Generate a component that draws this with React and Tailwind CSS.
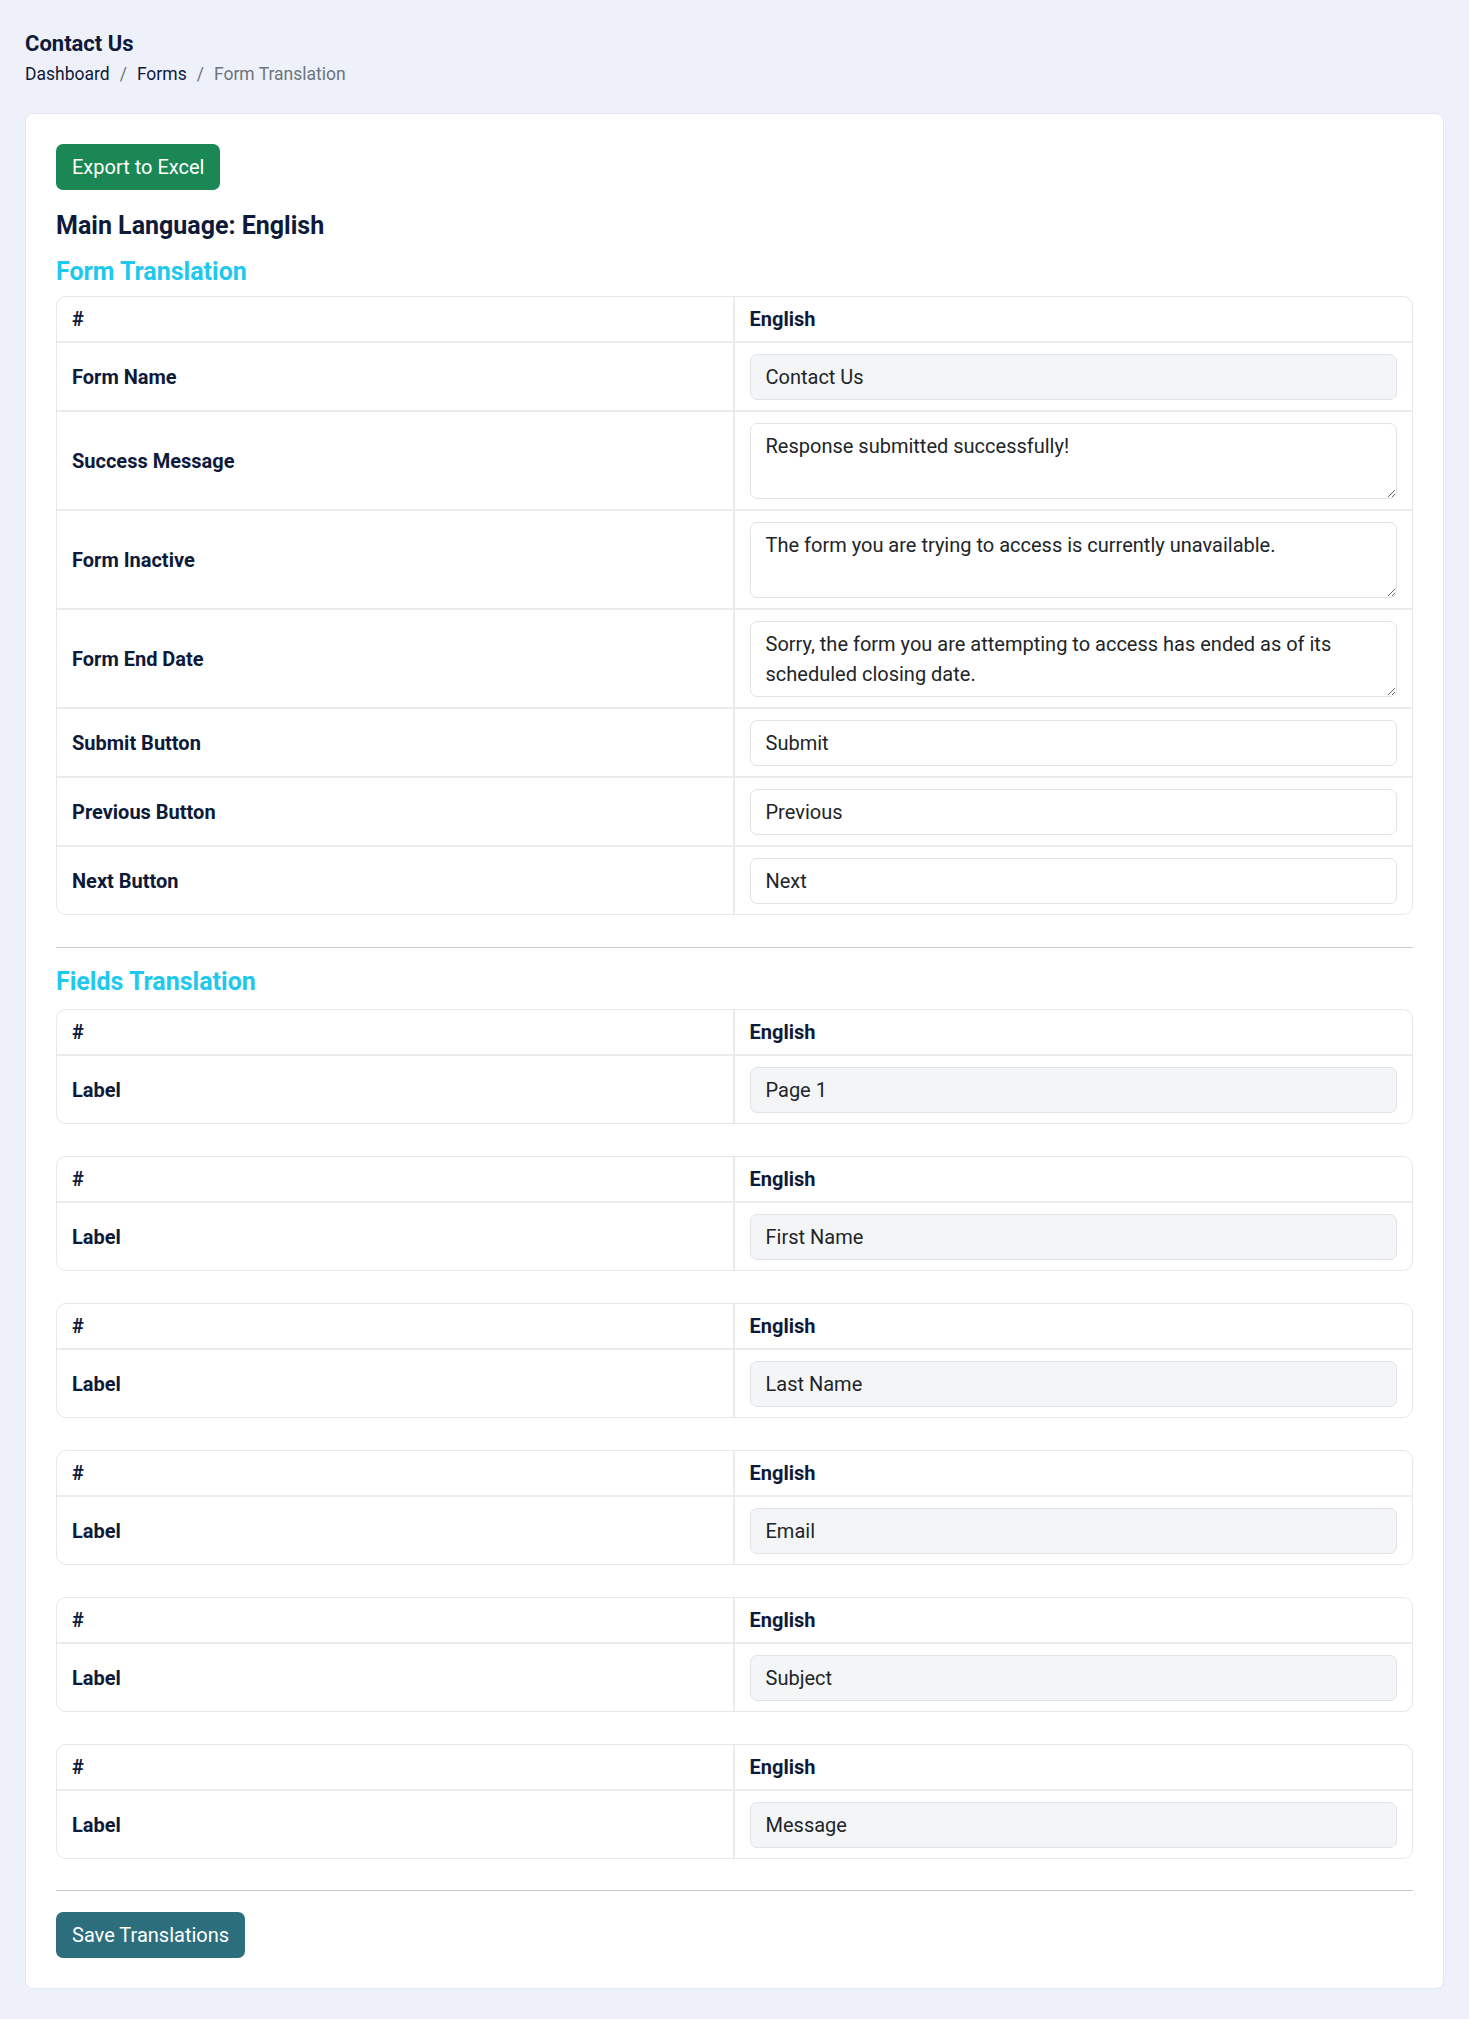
import React from 'react'

const FORM_ROWS = [
  { label: 'Form Name', value: 'Contact Us', kind: 'disabled' },
  { label: 'Success Message', value: 'Response submitted successfully!', kind: 'textarea' },
  { label: 'Form Inactive', value: 'The form you are trying to access is currently unavailable.', kind: 'textarea' },
  { label: 'Form End Date', value: 'Sorry, the form you are attempting to access has ended as of its scheduled closing date.', kind: 'textarea' },
  { label: 'Submit Button', value: 'Submit', kind: 'input' },
  { label: 'Previous Button', value: 'Previous', kind: 'input' },
  { label: 'Next Button', value: 'Next', kind: 'input' },
]

const FIELDS = ['Page 1', 'First Name', 'Last Name', 'Email', 'Subject', 'Message']

function Field({ kind, value }) {
  if (kind === 'textarea') {
    return (
      <textarea
        readOnly
        rows={2}
        defaultValue={value}
        className="block w-full h-[76px] resize-y rounded-[7px] border border-[#dfe3ea] bg-white px-[15px] py-[7px] text-[20px] leading-[30px] text-[#212529] outline-none"
      />
    )
  }
  return (
    <input
      readOnly
      defaultValue={value}
      className={
        kind === 'disabled'
          ? 'block w-full h-[46px] rounded-[7px] border border-[#dfe3ea] bg-[#f4f5f7] px-[15px] text-[20px] text-[#212529] outline-none'
          : 'block w-full h-[46px] rounded-[7px] border border-[#dfe3ea] bg-white px-[15px] text-[20px] text-[#212529] outline-none'
      }
    />
  )
}

function TransTable({ rows, className = '' }) {
  return (
    <div className={`rounded-[10px] border border-[#e6e7ea] overflow-hidden ${className}`}>
      <div className="grid grid-cols-2">
        <div className="px-[15px] py-[7px] leading-[30px] font-bold border-r-2 border-[#ececee]">#</div>
        <div className="px-[15px] py-[7px] leading-[30px] font-bold">English</div>
      </div>
      {rows.map((r) => (
        <div key={r.label + r.value} className="grid grid-cols-2 border-t-2 border-[#ececee]">
          <div className="flex items-center px-[15px] font-bold border-r-2 border-[#ececee]">{r.label}</div>
          <div className="px-[15px] pt-[11px] pb-[10px]">
            <Field kind={r.kind} value={r.value} />
          </div>
        </div>
      ))}
    </div>
  )
}

export default function App() {
  return (
    <div
      className="min-h-[2019px] bg-[#eef1f9] px-[25px] pt-[31px] pb-[32px] text-[20px] text-[#0e1a3a]"
      style={{ fontFamily: 'Roboto, "Liberation Sans", sans-serif' }}
    >
      <h1 className="text-[22px] leading-[26px] font-bold">Contact Us</h1>
      <nav className="mt-[4px] flex items-center text-[17.5px] leading-[26px]">
        <span>Dashboard</span>
        <span className="px-[10px] text-[#6c757d]">/</span>
        <span>Forms</span>
        <span className="px-[10px] text-[#6c757d]">/</span>
        <span className="text-[#6c757d]">Form Translation</span>
      </nav>

      <div className="mt-[26px] rounded-[8px] border border-[#e3e7ef] bg-white p-[30px]">
        <button className="h-[46px] rounded-[7px] bg-[#1a8754] px-[16px] text-[20px] text-white">
          Export to Excel
        </button>

        <h2 className="mt-[21px] text-[25px] leading-[30px] font-bold">Main Language: English</h2>
        <h3 className="mt-[16px] mb-[9px] text-[25px] leading-[30px] font-bold text-[#1ec8ee]">Form Translation</h3>
        <TransTable rows={FORM_ROWS} />

        <hr className="mt-[32px] border-t border-[#c6c8d0]" />

        <h3 className="mt-[19px] mb-[12px] text-[25px] leading-[30px] font-bold text-[#1ec8ee]">Fields Translation</h3>
        {FIELDS.map((f, i) => (
          <TransTable
            key={f}
            rows={[{ label: 'Label', value: f, kind: 'disabled' }]}
            className={i < FIELDS.length - 1 ? 'mb-[32px]' : ''}
          />
        ))}

        <hr className="mt-[31px] border-t border-[#c6c8d0]" />

        <button className="mt-[21px] h-[46px] rounded-[7px] bg-[#2d6e7c] px-[16px] text-[20px] text-white">
          Save Translations
        </button>
      </div>
    </div>
  )
}
